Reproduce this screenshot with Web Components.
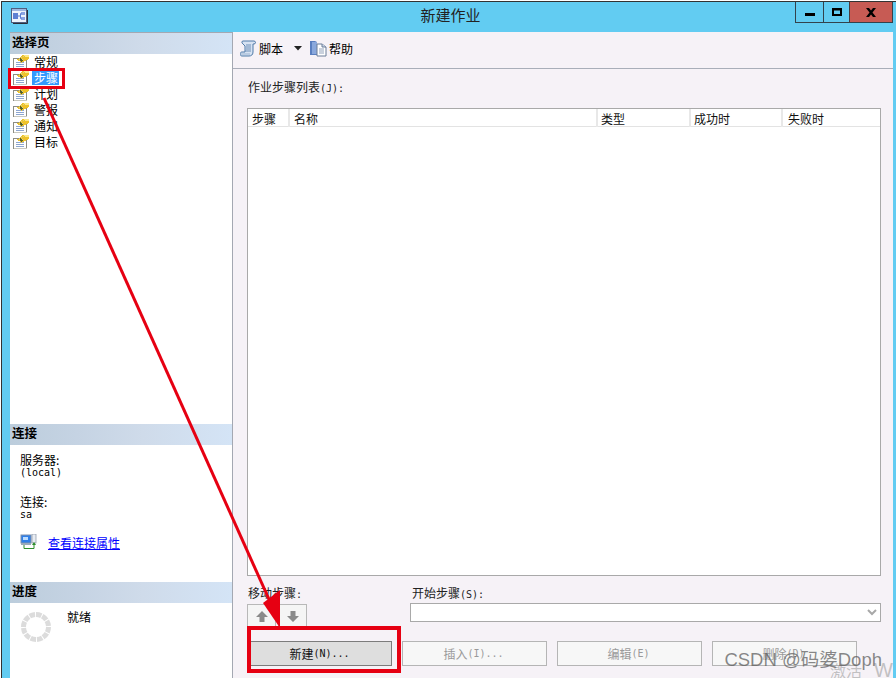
<!DOCTYPE html>
<html lang="zh"><head><meta charset="utf-8"><title>新建作业</title>
<style>
html,body{margin:0;padding:0;background:#fff;overflow:hidden;width:896px;height:678px}
body{font:12px/16px "Noto Sans CJK SC","Liberation Sans",sans-serif;color:#000}
</style></head><body>
<x-window>
  <x-titlebar slot="title">新建作业</x-titlebar>
  <x-side slot="side"></x-side>
  <x-main slot="main"></x-main>
</x-window>
<x-annotation></x-annotation>
<script>
const FONT='"Noto Sans CJK SC","Liberation Sans",sans-serif';
const def=(name,html)=>customElements.define(name,class extends HTMLElement{
  constructor(){super();this.attachShadow({mode:'open'}).innerHTML=html;}
});
const pageIcon=`<svg width="17" height="16" viewBox="0 0 17 16" shape-rendering="crispEdges">
<rect x=".5" y="4.500" width="13" height="10" fill="#fff" stroke="#8d8d84"/>
<rect x="1" y="14" width="13" height="1" fill="#c9c9c0"/>
<path d="M3 8.500h8M3 10.500h8M3 12.500h8" stroke="#8ea6cf"/>
<path d="M4 5h2V4h1V3h1V2h1V1h7v4h-1v1h-2v1h-2v1H9v1H8V8H7V7H5V6H4z" fill="#eec22a" shape-rendering="auto"/>
<path d="M4 5h2v1h1v1h1v1h1V7h1V6H9V5H8V4H7V5H6z" fill="#55602a"/>
<path d="M8 3h1v1H8zM9 5h1v1H9zM6 5h1v1H6zM10 2h1v1h-1z" fill="#d7d28a"/>
<path d="M11 1h5v2h-4V2h-1z" fill="#fbe98a"/>
</svg>`;
def('x-window',`<style>
:host{display:grid;box-sizing:border-box;width:896px;height:677px;margin:1px 0 0 1px;background:#62ccf2;
 border-left:1px solid #333;border-top:1px solid #333;
 grid-template-columns:223px 1fr;grid-template-rows:30px 1fr;padding-left:8px;padding-right:4px;overflow:hidden}
.t{grid-column:1/3;margin:0 -4px 0 -8px}
</style><div class="t"><slot name="title"></slot></div><slot name="side"></slot><slot name="main"></slot>`);

def('x-titlebar',`<style>
:host{display:flex;position:relative;height:30px;align-items:center;font:15px ${FONT};color:#222}
.ic{margin-left:9px;margin-top:-3px;width:17px;height:16px;display:block}
.title{position:absolute;left:0;right:0;top:3px;text-align:center;line-height:20px;transform:translateX(1px)}
.btns{margin-left:auto;margin-right:4px;align-self:flex-start;display:flex;height:21px;border:1px solid #33424c;border-top:0;box-sizing:border-box}
.b{display:flex;align-items:center;justify-content:center;box-sizing:border-box;height:100%}
.min{width:27px}.max{width:26px;border-left:1px solid #33424c}.cl{width:43px;background:#c75b54;border-left:1px solid #4b3a3a}
</style>
<svg class="ic" viewBox="0 0 17 16"><rect x=".5" y=".5" width="15" height="14" fill="#eef3fb" stroke="#4f5f80"/><path d="M16.500 2v13.500H2" fill="none" stroke="#2b2f3a"/><rect x="1" y="1" width="14" height="2" fill="#9fb6e0"/><rect x="2" y="5" width="5" height="6" fill="#5d7fd2"/><rect x="10" y="4" width="4" height="3" fill="#8ba4e2"/><rect x="10" y="9" width="4" height="3" fill="#8ba4e2"/><path d="M7 8h2.500M9.500 5.500v5h1M9.500 5.500h1" fill="none" stroke="#5d7fd2"/></svg>
<div class="title"><slot></slot></div>
<div class="btns">
 <div class="b min"><svg width="10" height="10" viewBox="0 0 10 10"><rect y="6" width="10" height="3"/></svg></div>
 <div class="b max"><svg width="10" height="10" viewBox="0 0 10 10"><path fill-rule="evenodd" d="M0 1h10v8H0zM2 3.500v3.500h6V3.500z"/></svg></div>
 <div class="b cl"><svg width="10" height="9" viewBox="0 0 10 9"><path d="M0 0h3l2 2.500L7 0h3L6.500 4.500 10 9H7L5 6.500 3 9H0l3.500-4.500z"/></svg></div>
</div>`);

def('x-sec',`<style>
:host{display:block;height:21px;box-sizing:border-box;padding-left:2px;font:bold 12.500px/18px ${FONT};color:#000;
 background:linear-gradient(90deg,#bccddc 0,#c5d3e3 30%,#cfdbea 60%,#d4e4f6 100%)}
</style><slot></slot>`);

def('x-pageitem',`<style>
:host{display:flex;height:16px;align-items:center;padding-left:3px;font:12px/15px ${FONT}}
svg{flex:none;margin-right:2px}
span{padding:0 1px 0 2px;margin-bottom:2px}
:host([sel]) span{background:#3399ff;color:#fff}
</style>${pageIcon}<span><slot></slot></span>`);

def('x-side',`<style>
:host{display:flex;flex-direction:column;background:#fff;border-top:1px solid #a4a8b2;border-right:1px solid #a4a8b2;box-sizing:border-box;min-height:0;font:12px/13px ${FONT}}
.list{flex:1}
.conn{height:137px;box-sizing:border-box;padding:8px 0 0 10px}
.l{line-height:14px}.m{font:10px/10px "DejaVu Sans Mono",monospace;margin-top:1px}
.link{display:flex;align-items:center;margin-top:13px;gap:11px;color:#00f;text-decoration:underline;height:18px}
.prog{height:75px;box-sizing:border-box;padding:7px 0 0 11px;display:flex;gap:16px}
.prog svg{margin-top:2px}
</style>
<x-sec>选择页</x-sec>
<div class="list">
<x-pageitem>常规</x-pageitem><x-pageitem sel>步骤</x-pageitem><x-pageitem>计划</x-pageitem><x-pageitem>警报</x-pageitem><x-pageitem>通知</x-pageitem><x-pageitem>目标</x-pageitem>
</div>
<x-sec>连接</x-sec>
<div class="conn">
 <div class="l">服务器:</div><div class="m">(local)</div>
 <div class="l" style="margin-top:17px">连接:</div><div class="m">sa</div>
 <div class="link"><svg width="17" height="16" viewBox="0 0 17 16"><rect x="1" y="1" width="10" height="8" fill="#2f7fe8" stroke="#7d90ad"/><rect x="3" y="3" width="5" height="3" fill="#bcdcff"/><rect x="1" y="9" width="10" height="2" fill="#9aa8bb"/><rect x="12" y="0" width="4" height="9" fill="#e8ecf2" stroke="#8692a4" stroke-width=".7"/><path d="M4 11v3.500h10V10" fill="none" stroke="#2c8c2c"/><path d="M12 11l2-3 2 3z" fill="#2c8c2c"/></svg><span>查看连接属性</span></div>
</div>
<x-sec>进度</x-sec>
<div class="prog"><svg width="30" height="30" viewBox="0 0 30 30"><circle cx="15" cy="15" r="12.500" fill="none" stroke="#dcdcdc" stroke-width="5" stroke-dasharray="5.500 1"/></svg><div style="line-height:14px">就绪</div></div>`);

def('x-tbtn',`<style>:host{display:inline-flex;align-items:center;gap:2px;font:12px ${FONT}}</style><slot name="i"></slot><slot></slot>`);

def('x-listview',`<style>
:host{display:flex;flex-direction:column;flex:1;min-height:0;background:#fff;border:1px solid #a9a9a9;font:12px/17px ${FONT}}
.h{display:grid;grid-template-columns:42px 308px 93px 92px 1fr;height:17px;border-bottom:1px solid #e3e3e3}
.h div{padding:1px 0 0 3px;border-right:2px solid #e8e8e8;box-sizing:border-box;color:#111}
.h div:first-child{padding-left:4px}.h div:nth-child(2){padding-left:4px}
.h div:last-child{border-right:0;padding-left:5px}
</style><div class="h"><div>步骤</div><div>名称</div><div>类型</div><div>成功时</div><div>失败时</div></div>`);

def('x-abtn',`<style>
:host{display:flex;align-items:center;justify-content:center;box-sizing:border-box;width:29px;height:25px;border:1px solid #b8b8b8;background:#f5f5f5}
path{fill:#8a8a8a}
</style><svg width="12" height="11" viewBox="0 0 12 11"><path d="M6 0l6 6H8.500v5h-5V6H0z"/></svg>`);

def('x-btn',`<style>
:host{display:flex;align-items:center;justify-content:center;box-sizing:border-box;width:145px;height:25px;border:1px solid #b5b5b5;background:#f7f7f7;color:#9a9a9a;font:12px ${FONT};padding-right:2px}
:host([primary]){width:143px;background:#dedede;border-color:#7c7c7c;color:#111}
</style><slot></slot>`);

def('x-mono',`<style>:host{display:inline;font:10px "DejaVu Sans Mono",monospace}</style><slot></slot>`);

def('x-combo',`<style>
:host{display:flex;align-items:center;justify-content:flex-end;box-sizing:border-box;height:19px;background:#fff;border:1px solid #a9a9a9;padding-right:3px}
</style><svg width="10" height="8" viewBox="0 0 10 8"><path d="M1 1l4 4 4-4" fill="none" stroke="#a8a8a8" stroke-width="2"/></svg>`);

def('x-main',`<style>
:host{display:flex;flex-direction:column;background:#f6f2f7;min-height:0;font:12px/16px ${FONT};position:relative;overflow:hidden}
.tb{height:37px;box-sizing:border-box;border-bottom:1px solid #a9aeb9;display:flex;align-items:center;padding:0 0 3px 7px;flex:none}
.arr{margin:0 7px 0 11px}
.body{flex:1;display:flex;flex-direction:column;padding:8px 12px 0 14px;min-height:0}
.lab{height:31px;color:#222;line-height:19px;padding-left:1px;box-sizing:border-box}
.row{display:grid;grid-template-columns:163px 1fr;margin-top:9px;height:31px}
.lab2{height:15px;color:#222;line-height:15px;padding-left:1px}
.lab2.b{padding-left:2px}
.move{display:flex;gap:2px;margin-top:1px}
.acts{display:flex;gap:10px;margin:12px 0 0 2px;height:37px;flex:none}
.wm{position:absolute;right:11px;bottom:7px;font:18.500px/22px "Liberation Sans",${FONT};color:rgba(90,90,90,.72);white-space:nowrap}
.wm2{position:absolute;left:597px;bottom:-3px;font:16px/22px ${FONT};color:rgba(170,170,170,.7);white-space:nowrap}
.wm2 span{margin-left:12px;font-size:20px;font-family:"Liberation Sans"}
</style>
<div class="tb">
 <x-tbtn><svg slot="i" width="17" height="17" viewBox="0 0 17 17"><path d="M3 1h11c2 0 2 3 0 3h-1v8c0 3-2 4-4 4H2c-2.500 0-2.500-4 0-4h3V6L3 4C1.500 3 1.500 1 3 1z" fill="#d6e2f2" stroke="#4f7aa8"/><path d="M6 5h5M6 7h5M6 9h5M5 11h6" stroke="#6e90b8"/><path d="M1 14h9" stroke="#9fb6d2"/></svg>脚本</x-tbtn>
 <svg class="arr" width="9" height="5" viewBox="0 0 9 5"><path d="M0 0h8L4 4.500z" fill="#222"/></svg>
 <x-tbtn><svg slot="i" width="17" height="17" viewBox="0 0 17 17"><path d="M0 1h5l2 1v13H0z" fill="#5a7fc0"/><path d="M2 2h5v12H2z" fill="#8aa8dc"/><path d="M7 4h5l4 3v9H7z" fill="#fff" stroke="#6a7c98"/><path d="M9 9h5M9 11h5M9 13h5" stroke="#93a3bb"/><path d="M12 4v3h4" fill="#cdd8ea" stroke="#6a7c98"/></svg>帮助</x-tbtn>
</div>
<div class="body">
 <div class="lab">作业步骤列表<x-mono>(J):</x-mono></div>
 <x-listview></x-listview>
 <div class="row">
  <div class="lab2">移动步骤<x-mono>:</x-mono></div>
  <div class="lab2 b">开始步骤<x-mono>(S):</x-mono></div>
 </div>
 <div class="row" style="margin-top:-13px;height:auto">
  <div class="move"><x-abtn></x-abtn><x-abtn style="transform:scaleY(-1)"></x-abtn></div>
  <div><x-combo></x-combo></div>
 </div>
 <div class="acts">
  <x-btn primary>新建<x-mono>(N)...</x-mono></x-btn><x-btn>插入<x-mono>(I)...</x-mono></x-btn><x-btn>编辑<x-mono>(E)</x-mono></x-btn><x-btn>删除<x-mono>(D)</x-mono></x-btn>
 </div>
</div>
<div class="wm2">激活<span>W</span></div>
<div class="wm">CSDN @码婆Doph</div>`);

def('x-annotation',`<style>
:host{position:absolute;left:0;top:0;width:896px;height:678px;pointer-events:none;display:block}
</style>
<svg width="896" height="678" viewBox="0 0 896 678" shape-rendering="crispEdges">
<rect x="9.500" y="69.500" width="54" height="18" fill="none" stroke="#e60012" stroke-width="3"/>
<rect x="249" y="628" width="150" height="43" fill="none" stroke="#e60012" stroke-width="3.500"/>
<path d="M44 98L272 606" stroke="#e60012" stroke-width="3" shape-rendering="auto"/>
<path d="M263 603L280 590V628z" fill="#e60012" shape-rendering="auto"/>
</svg>`);
</script>
</body></html>
